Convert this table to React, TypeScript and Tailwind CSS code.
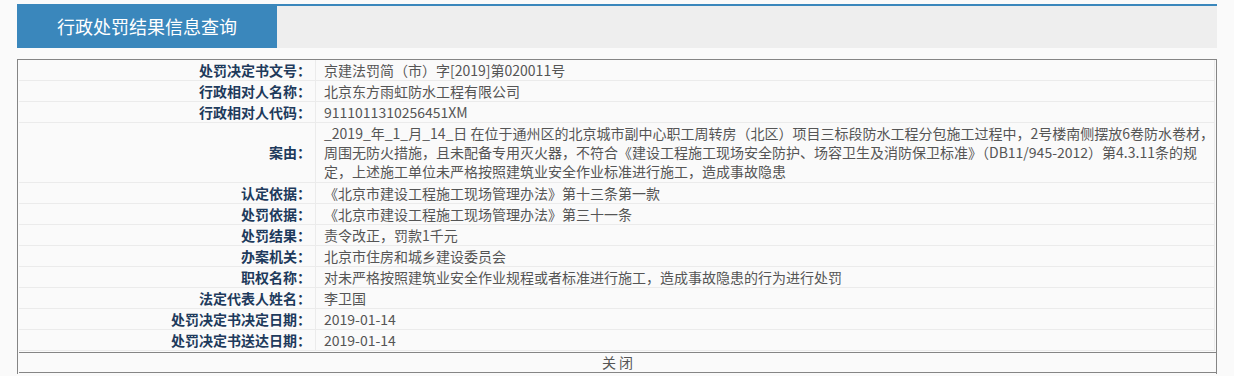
import React from "react";

const font = { fontFamily: '"Noto Sans CJK SC", "Noto Sans", sans-serif' };

type Row = { label: string; value: React.ReactNode; multi?: boolean };

const rows: Row[] = [
  { label: "处罚决定书文号：", value: "京建法罚简（市）字[2019]第020011号" },
  { label: "行政相对人名称：", value: "北京东方雨虹防水工程有限公司" },
  { label: "行政相对人代码：", value: "9111011310256451XM" },
  {
    label: "案由：",
    multi: true,
    value: (
      <>
        <span className="block whitespace-nowrap">
          _2019_年_1_月_14_日 在位于通州区的北京城市副中心职工周转房（北区）项目三标段防水工程分包施工过程中，2号楼南侧摆放6卷防水卷材，
        </span>
        <span className="block whitespace-nowrap">
          周围无防火措施，且未配备专用灭火器，不符合《建设工程施工现场安全防护、场容卫生及消防保卫标准》（DB11/945-2012）第4.3.11条的规
        </span>
        <span className="block whitespace-nowrap">
          定，上述施工单位未严格按照建筑业安全作业标准进行施工，造成事故隐患
        </span>
      </>
    ),
  },
  { label: "认定依据：", value: "《北京市建设工程施工现场管理办法》第十三条第一款" },
  { label: "处罚依据：", value: "《北京市建设工程施工现场管理办法》第三十一条" },
  { label: "处罚结果：", value: "责令改正，罚款1千元" },
  { label: "办案机关：", value: "北京市住房和城乡建设委员会" },
  { label: "职权名称：", value: "对未严格按照建筑业安全作业规程或者标准进行施工，造成事故隐患的行为进行处罚" },
  { label: "法定代表人姓名：", value: "李卫国" },
  { label: "处罚决定书决定日期：", value: "2019-01-14" },
  { label: "处罚决定书送达日期：", value: "2019-01-14" },
];

export default function App() {
  return (
    <div className="min-h-[376px] w-full bg-[#fafafa]" style={font}>
      <div className="mx-auto w-[1200px] pt-[4px]">
        {/* header */}
        <div className="flex h-[44px]">
          <div className="flex w-[260px] items-center justify-center bg-[#3a87bc] text-[18px] text-white">
            行政处罚结果信息查询
          </div>
          <div className="flex-1 border-t-2 border-[#3a87bc] bg-[#eeeeee]" />
        </div>

        {/* table */}
        <div className="mt-[11px] border-x border-t border-[#858585] px-[1px] pb-[1px]">
          {rows.map((r, i) => (
            <div key={i} className="flex border-b border-[#ebebeb]">
              <div
                className={`flex w-[297px] shrink-0 items-center justify-end border-r border-[#ebebeb] pr-[4px] text-[14px] font-bold text-[#1e3a5c] ${
                  r.multi ? "h-[59px]" : "h-[20px]"
                }`}
              >
                {r.label}
              </div>
              <div
                className={`flex-1 border-r border-[#ebebeb] pl-[8px] text-[14px] text-[#555555] ${
                  r.multi ? "h-[59px] py-[1px] leading-[19px]" : "h-[20px] leading-[20px]"
                }`}
              >
                {r.value}
              </div>
            </div>
          ))}
          <div className="mr-[-1px] mt-[1px] h-[21px] border-y border-[#858585] text-center text-[14px] leading-[19px] text-[#555555]">
            关 闭
          </div>
        </div>
      </div>
    </div>
  );
}
